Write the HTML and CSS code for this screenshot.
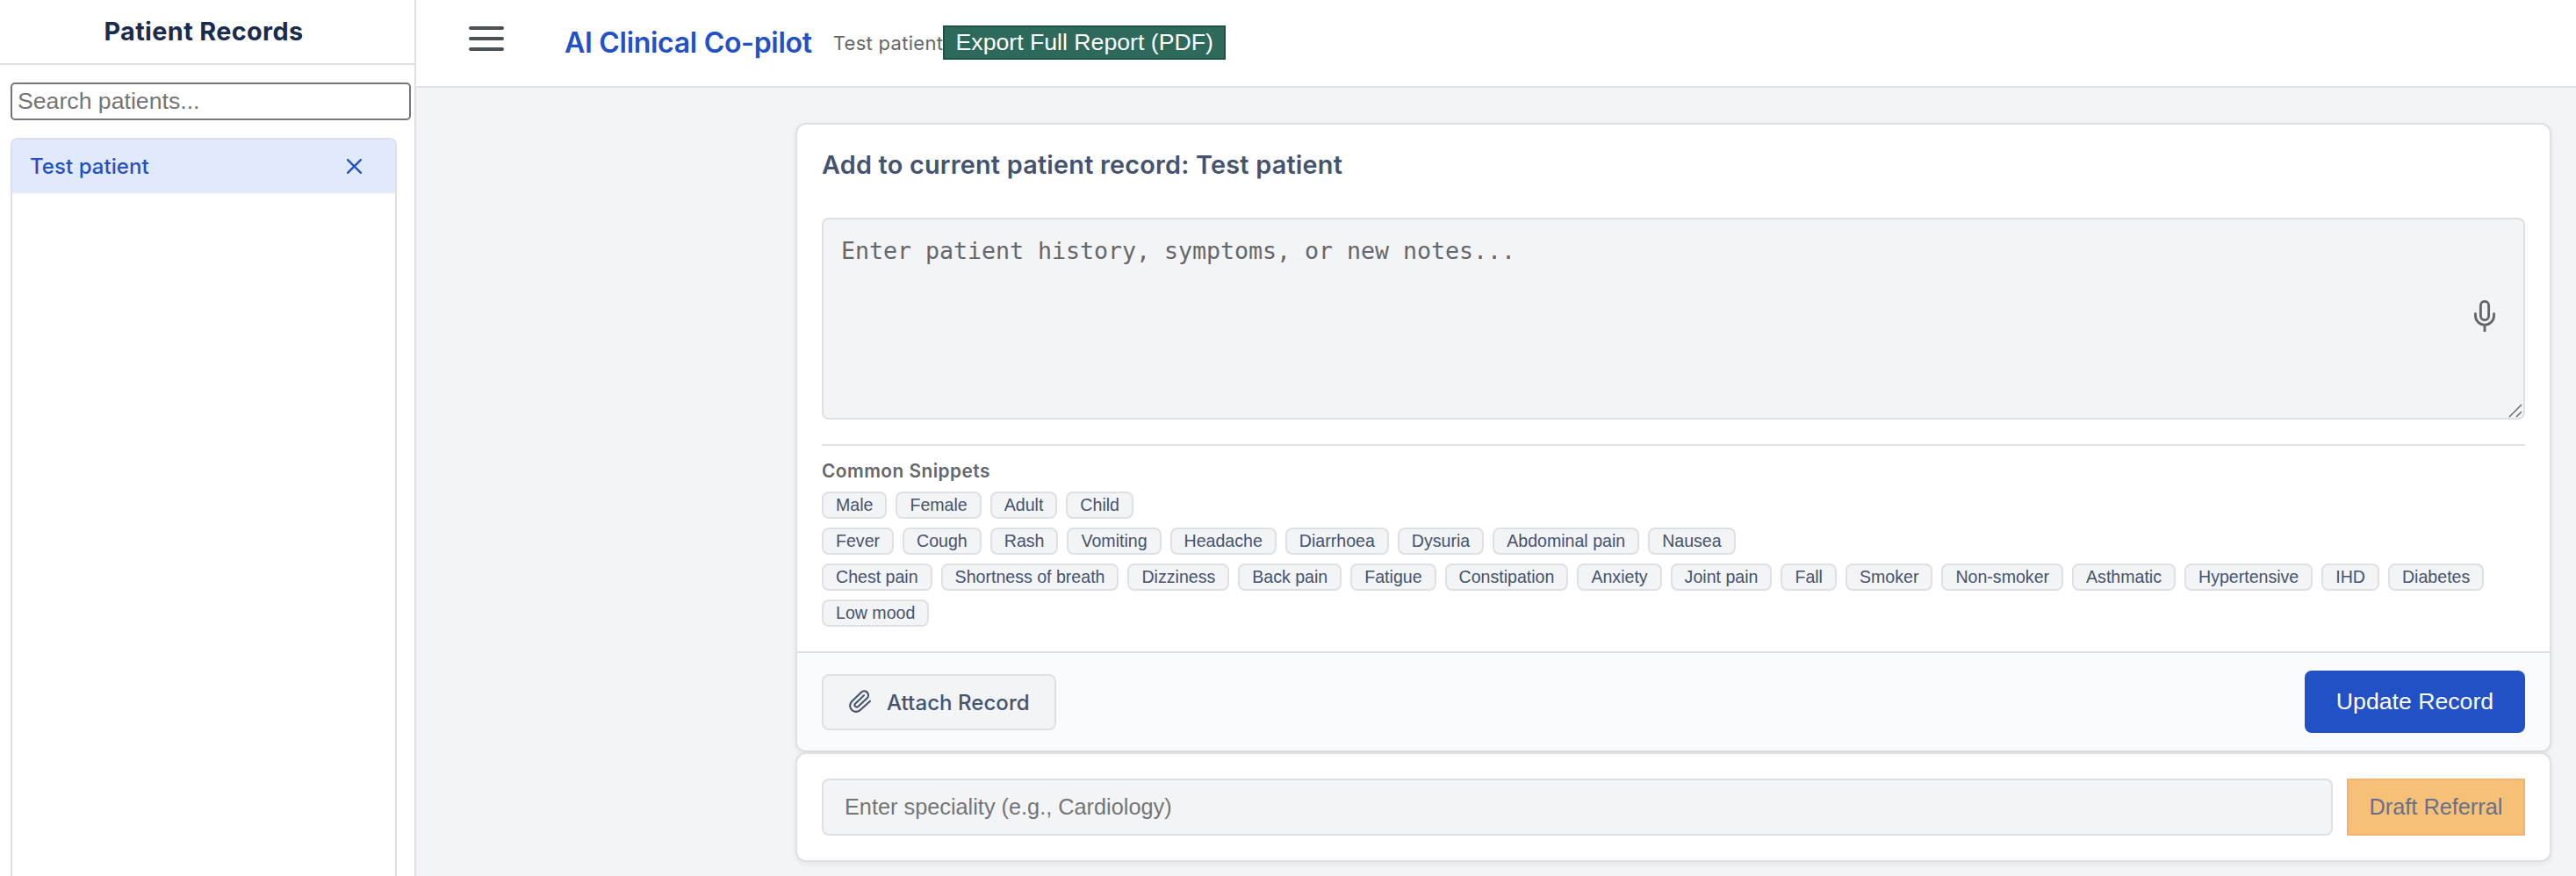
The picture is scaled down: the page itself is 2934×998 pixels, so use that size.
FILE: index.html
```html
<!DOCTYPE html>
<html lang="en">
<head>
<meta charset="utf-8">
<title>AI Clinical Co-pilot</title>
<link rel="stylesheet" href="styles.css">
</head>
<body>
<div class="app">
  <aside class="sidebar">
    <h2 class="sidebar-title">Patient Records</h2>
    <div class="sidebar-body">
      <input class="search" type="text" placeholder="Search patients...">
      <ul class="patients">
        <li class="patient"><span class="patient-name">Test patient</span>
          <svg class="close" viewBox="0 0 16 16"><path d="M1 1L15 15M15 1L1 15"/></svg>
        </li>
      </ul>
    </div>
  </aside>
  <div class="main">
    <header class="topbar">
      <button class="menu" aria-label="Menu"><i></i><i></i><i></i></button>
      <h1 class="brand">AI Clinical Co-pilot</h1>
      <span class="current">Test patient</span>
      <button class="export">Export Full Report (PDF)</button>
    </header>
    <main class="content">
      <section class="card">
        <div class="card-body">
          <h3 class="card-title">Add to current patient record: Test patient</h3>
          <div class="notes-wrap">
            <textarea class="notes" placeholder="Enter patient history, symptoms, or new notes..."></textarea>
            <svg class="mic" viewBox="0 0 24 36"><rect x="7.4" y="1.4" width="9.2" height="21.2" rx="4.6"/><path stroke-linecap="round" d="M1.4 15.4v2.1a10.6 10.6 0 0 0 21.2 0v-2.1"/><path d="M12 28.5V36"/></svg>
            <svg class="grip" viewBox="0 0 16 16"><path d="M1 15L15 1M9 15L15 9"/></svg>
          </div>
          <div class="snippets">
            <h4 class="snippets-title">Common Snippets</h4>
            <div class="chips"><button class="chip">Male</button><button class="chip">Female</button><button class="chip">Adult</button><button class="chip">Child</button></div>
            <div class="chips"><button class="chip">Fever</button><button class="chip">Cough</button><button class="chip">Rash</button><button class="chip">Vomiting</button><button class="chip">Headache</button><button class="chip">Diarrhoea</button><button class="chip">Dysuria</button><button class="chip">Abdominal pain</button><button class="chip">Nausea</button></div>
            <div class="chips"><button class="chip">Chest pain</button><button class="chip">Shortness of breath</button><button class="chip">Dizziness</button><button class="chip">Back pain</button><button class="chip">Fatigue</button><button class="chip">Constipation</button><button class="chip">Anxiety</button><button class="chip">Joint pain</button><button class="chip">Fall</button><button class="chip">Smoker</button><button class="chip">Non-smoker</button><button class="chip">Asthmatic</button><button class="chip">Hypertensive</button><button class="chip">IHD</button><button class="chip">Diabetes</button><button class="chip">Low mood</button></div>
          </div>
        </div>
        <footer class="card-footer">
          <button class="attach">
            <svg class="clip" viewBox="48 46 81 87"><path d="M123 87L90 117A20.5 20.5 0 0 1 60 89L93 57A14.2 14.2 0 0 1 114 76L82 106A7.1 7.1 0 0 1 72 96L102 68"/></svg>
            <span>Attach Record</span>
          </button>
          <button class="update">Update Record</button>
        </footer>
      </section>
      <section class="card referral">
        <input class="speciality" type="text" placeholder="Enter speciality (e.g., Cardiology)">
        <button class="draft">Draft Referral</button>
      </section>
    </main>
  </div>
</div>
</body>
</html>
```
FILE: styles.css
```css
* { box-sizing: border-box; }
body { margin: 0; background: #f3f4f6; font-family: Inter, "Liberation Sans", sans-serif; overflow: hidden; }
button, input { font-family: "Liberation Sans", Arial, sans-serif; font-size: 26.67px; }
button { margin: 0; }
h1, h2, h3, h4, ul { margin: 0; padding: 0; }

.app { display: flex; height: 998px; }
.sidebar { width: 474px; flex: none; display: flex; flex-direction: column; background: #fff; border-right: 2px solid #dfe0e6; }
.sidebar-title { height: 74px; border-bottom: 2px solid #dfe0e6; color: #1a2b50; font-size: 28.8px; font-weight: 700; line-height: 72px; letter-spacing: .38px; padding-right: 8px; text-align: center; }
.sidebar-body { flex: 1; display: flex; flex-direction: column; padding: 20px 4px 0 12px; min-height: 0; }
.search { width: 456px; height: 43px; padding: 0 6px; border: 2px solid #767676; border-radius: 5px; background: #fff; }
.search::placeholder { color: #757575; }
.patients { flex: 1; width: 440px; margin-top: 20px; border: 2px solid #dfe0e6; border-bottom: 0; border-radius: 8px 8px 0 0; list-style: none; overflow: hidden; }
.patient { display: flex; align-items: center; justify-content: space-between; height: 62px; padding: 0 38px 0 20px; border-bottom: 2px solid #f0f1f6; background: #e1eafd; color: #2250c5; font-size: 24px; font-weight: 500; letter-spacing: .05px; }
.close { width: 17px; height: 17px; fill: none; stroke: #2250c5; stroke-width: 2.2; stroke-linecap: round; }

.main { flex: 1; display: flex; flex-direction: column; min-width: 0; }
.topbar { display: flex; align-items: center; height: 100px; padding: 0 0 2px 60px; border-bottom: 2px solid #dfe0e6; background: #fff; }
.menu { display: flex; flex-direction: column; gap: 8px; width: 40px; margin: -8px 69px 0 0; padding: 0; border: 0; background: none; }
.menu i { height: 4px; border-radius: 2px; background: #4b5055; }
.brand { padding-top: 1px; color: #2250c5; font-size: 32px; font-weight: 600; line-height: 40px; letter-spacing: -.3px; }
.current { margin-left: 24px; padding-top: 2px; color: #66676c; font-size: 22px; letter-spacing: .3px; }
.export { width: 322px; height: 39px; padding: 0; border: 2px solid #1e5246; background: #2d6a5b; color: #fff; line-height: 32px; white-space: nowrap; }

.content { display: flex; flex-direction: column; padding: 40px 28px 0 432px; }
.card { border: 2px solid #dfe0e6; border-radius: 12px; background: #fff; box-shadow: 0 2px 6px rgba(20, 30, 60, .07); overflow: hidden; }
.card-body { height: 600px; padding: 28px 28px 0; }
.card-title { color: #44536f; font-size: 28.8px; font-weight: 600; line-height: 36px; letter-spacing: .22px; }
.notes-wrap { position: relative; height: 230px; margin-top: 42px; }
.notes { display: block; width: 100%; height: 100%; padding: 20px; border: 2px solid #dfe0e6; border-radius: 8px; background: #f3f4f6; font-family: "DejaVu Sans Mono", monospace; font-size: 26.67px; line-height: 32px; letter-spacing: -.05px; resize: none; }
.notes::placeholder { color: #66676c; }
.mic { position: absolute; right: 34px; top: 94px; width: 24px; height: 36px; fill: none; stroke: #66676c; stroke-width: 2.9; }
.grip { position: absolute; right: 3px; bottom: 2px; width: 16px; height: 16px; fill: none; stroke: #606260; stroke-width: 1.4; }
.snippets { margin-top: 28px; padding-top: 16px; border-top: 2px solid #dfe0e6; }
.snippets-title { height: 36px; color: #66676c; font-size: 20.8px; font-weight: 600; line-height: 26px; letter-spacing: .48px; }
.chips { display: flex; flex-wrap: wrap; gap: 10px; margin-bottom: 10px; }
.chip { height: 31px; padding: 0 14px; border: 2px solid #dfe0e6; border-radius: 8px; background: #f3f4f6; color: #44536f; font-size: 19.59px; line-height: 25px; }
.card-footer { display: flex; align-items: center; justify-content: space-between; height: 113px; padding: 0 28px; border-top: 2px solid #dfe0e6; background: #fafbfd; }
.attach { display: flex; align-items: center; width: 267px; height: 64px; padding: 0 0 0 28px; border: 2px solid #dfe0e6; border-radius: 8px; background: #f3f4f6; color: #44536f; font-family: Inter, sans-serif; font-size: 24px; font-weight: 500; letter-spacing: .06px; white-space: nowrap; }
.attach span { padding-top: 1px; }
.clip { flex: none; width: 27px; height: 29px; margin-right: 17px; fill: none; stroke: #44536f; stroke-width: 6.4; stroke-linecap: round; stroke-linejoin: round; }
.update { width: 251px; height: 71px; padding: 0; border: 0; border-radius: 8px; background: #2250c5; color: #fff; }
.referral { display: flex; gap: 16px; height: 125px; padding: 28px; }
.speciality { flex: 1; height: 65px; padding: 0 24px; border: 2px solid #dfe0e6; border-radius: 8px; background: #f3f4f6; font-size: 25.3px; }
.speciality::placeholder { color: #757575; }
.draft { width: 203px; height: 65px; padding: 0; border: 2px solid #f3b271; background: #f6c177; color: #66708a; font-size: 25.3px; }
```
